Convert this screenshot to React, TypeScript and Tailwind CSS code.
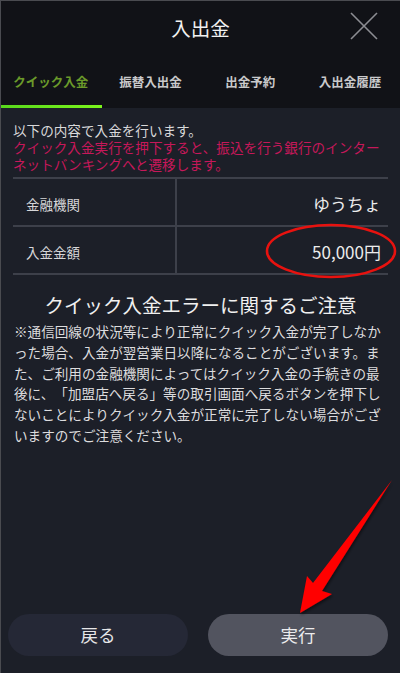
import React from 'react';

const tabs = ['クイック入金', '振替入出金', '出金予約', '入出金履歴'];

const CloseIcon = () => (
  <svg width="30" height="30" viewBox="0 0 30 30" fill="none">
    <path d="M2 2 L28 28 M28 2 L2 28" stroke="#8c8d92" strokeWidth="1.6" />
  </svg>
);

const Row = ({ label, value }: { label: string; value: string }) => (
  <div className="flex h-[48px] border-b-2 border-[#3d404a]">
    <div className="w-[164px] border-r-2 border-[#3d404a] flex items-center pl-[13px] pt-[4px] text-[13.5px] text-[#d6d6d8]">
      {label}
    </div>
    <div className="flex-1 flex items-center justify-end pr-[7px] pt-[3px] text-[17px] text-[#ececec]">{value}</div>
  </div>
);

export default function App() {
  return (
    <div
      className="relative w-[400px] h-[673px] flex flex-col overflow-hidden border-t border-l border-[#4a4b50] bg-[#1c1f28] [text-spacing-trim:space-all]"
      style={{ fontFamily: '"Noto Sans CJK JP", "Noto Sans", sans-serif' }}
    >
      {/* header */}
      <div className="bg-[#111217] h-[107px] flex flex-col shrink-0">
        <div className="relative h-[53px] flex items-center justify-center text-[19.5px] text-[#f2f2f2]">
          入出金
          <div className="absolute right-[21px] top-[10px]">
            <CloseIcon />
          </div>
        </div>
        <div className="flex h-[51px] items-center pt-[6px]">
          {tabs.map((t, i) => (
            <div
              key={t}
              className={
                'w-[100px] text-center text-[12.5px] font-bold ' +
                (i === 0 ? 'text-[#6b9a2a]' : 'text-[#c9c9cb]')
              }
            >
              {t}
            </div>
          ))}
        </div>
        <div className="h-[3px] w-[101px] bg-gradient-to-r from-[#58d81c] to-[#7cf51c]" />
      </div>

      {/* body */}
      <div className="flex-1 flex flex-col px-[12px]">
        <div className="pt-[14px] text-[13.6px] leading-[17px]">
          <div className="text-[#d8d8da]">以下の内容で入金を行います。</div>
          <div className="text-[#c6185a]">
            クイック入金実行を押下すると、振込を行う銀行のインター
            <br />
            ネットバンキングへと遷移します。
          </div>
        </div>

        <div className="mt-[4px] border-t-2 border-[#3d404a]">
          <Row label="金融機関" value="ゆうちょ" />
          <Row label="入金金額" value="50,000円" />
        </div>

        <div className="mt-[16px] h-[28px] flex items-center justify-center text-[19.5px] text-[#f0f0f0]">
          クイック入金エラーに関するご注意
        </div>
        <p className="mt-[2px] pl-[1px] text-[13.6px] leading-[20.8px] text-[#dcdcde]">
          ※通信回線の状況等により正常にクイック入金が完了しなかった場合、入金が翌営業日以降になることがございます。また、ご利用の金融機関によってはクイック入金の手続きの最後に、「加盟店へ戻る」等の取引画面へ戻るボタンを押下しないことによりクイック入金が正常に完了しない場合がございますのでご注意ください。
        </p>
      </div>

      {/* buttons */}
      <div className="flex gap-[20px] pl-[7px] pb-[17px]">
        <button className="w-[180px] h-[42px] rounded-full bg-[#252836] text-[17.5px] text-[#e6e6e8]">戻る</button>
        <button className="w-[180px] h-[42px] rounded-full bg-[#52545f] text-[17.5px] text-[#ececee]">実行</button>
      </div>

      {/* annotations */}
      <svg className="absolute left-0 top-0 pointer-events-none" width="400" height="673">
        <defs>
          <filter id="sh" x="-20%" y="-20%" width="140%" height="140%">
            <feDropShadow dx="1" dy="2" stdDeviation="1.5" floodColor="#000" floodOpacity="0.5" />
          </filter>
        </defs>
        <ellipse cx="330" cy="250" rx="64" ry="26" fill="none" stroke="#e8120f" strokeWidth="2.6" />
        <polygon
          points="391,479 321,590 331,593 299,612 306,575 312,582"
          fill="#ff0000"
          filter="url(#sh)"
        />
      </svg>
    </div>
  );
}
